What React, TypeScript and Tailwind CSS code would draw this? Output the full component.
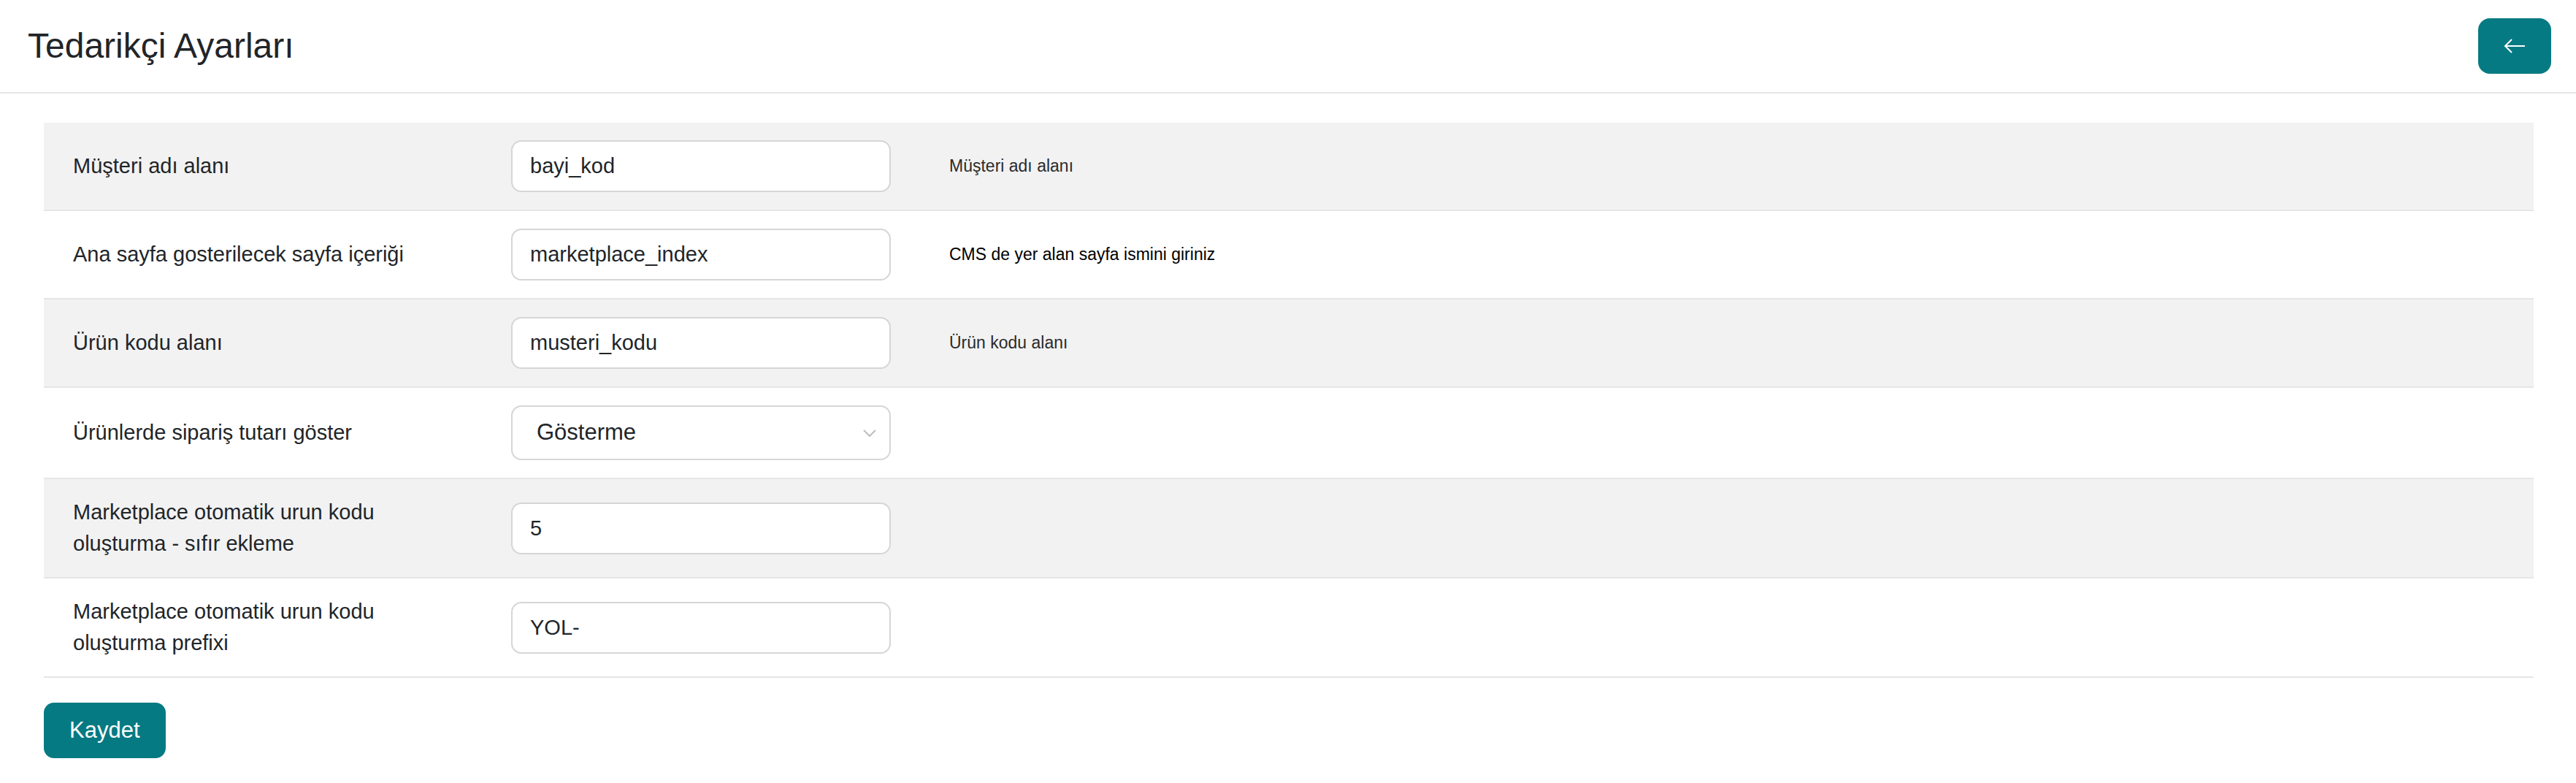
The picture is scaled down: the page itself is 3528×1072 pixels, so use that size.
import React from "react";

type Row = {
  label: string;
  value: string;
  hint?: string;
  hintDark?: boolean;
  select?: boolean;
};

const rows: Row[] = [
  { label: "Müşteri adı alanı", value: "bayi_kod", hint: "Müşteri adı alanı" },
  {
    label: "Ana sayfa gosterilecek sayfa içeriği",
    value: "marketplace_index",
    hint: "CMS de yer alan sayfa ismini giriniz",
    hintDark: true,
  },
  { label: "Ürün kodu alanı", value: "musteri_kodu", hint: "Ürün kodu alanı" },
  { label: "Ürünlerde sipariş tutarı göster", value: "Gösterme", select: true },
  { label: "Marketplace otomatik urun kodu oluşturma - sıfır ekleme", value: "5" },
  { label: "Marketplace otomatik urun kodu oluşturma prefixi", value: "YOL-" },
];

function SettingField({ row }: { row: Row }) {
  if (row.select) {
    return (
      <div className="relative w-[520px]">
        <select
          defaultValue={row.value}
          className="h-[75px] w-full appearance-none rounded-[14px] border-2 border-[#d6d6d6] bg-white pl-[33px] pr-12 text-[31px] text-[#212529] outline-none"
        >
          <option>Gösterme</option>
          <option>Göster</option>
        </select>
        <svg
          className="pointer-events-none absolute right-[20px] top-[33px]"
          width="18"
          height="10"
          viewBox="0 0 18 10"
          fill="none"
        >
          <path d="M1 1l8 8 8-8" stroke="#bdbdbd" strokeWidth="2" />
        </svg>
      </div>
    );
  }
  return (
    <input
      defaultValue={row.value}
      className="h-[71px] w-[520px] rounded-[14px] border-2 border-[#d6d6d6] bg-white px-[24px] text-[29px] text-[#212529] outline-none"
    />
  );
}

export default function App() {
  return (
    <div className="min-h-screen bg-white font-['Liberation_Sans',Arial,sans-serif] text-[#212529]">
      <header className="flex h-[128px] items-center justify-between border-b-2 border-[#e6e6e6] pl-[38px] pr-[34px]">
        <h1 className="text-[48px] font-normal leading-none">Tedarikçi Ayarları</h1>
        <button className="flex h-[76px] w-[100px] items-center justify-center rounded-[16px] bg-[#067a82]">
          <svg width="30" height="20" viewBox="0 0 30 20" fill="none">
            <path d="M29 10H2M11 1L2 10l9 9" stroke="white" strokeWidth="2" />
          </svg>
        </button>
      </header>

      <main className="pl-[60px] pr-[58px] pt-[40px]">
        <div>
          {rows.map((row, i) => (
            <div
              key={row.label}
              className={`grid grid-cols-[600px_600px_1fr] items-center border-b-2 border-[#e6e6e6] ${
                i % 2 === 0 ? "bg-[#f2f2f2]" : "bg-white"
              }`}
            >
              <div className="px-10 py-6 text-[29px] leading-[43px]">{row.label}</div>
              <div className="px-10 py-6">
                <SettingField row={row} />
              </div>
              <div
                className={`px-10 py-6 text-[23px] ${
                  row.hintDark ? "text-black" : "text-[#2b2b2b]"
                }`}
              >
                {row.hint}
              </div>
            </div>
          ))}
        </div>
        <button className="mt-[34px] h-[76px] rounded-[14px] bg-[#067a82] px-[35px] text-[31px] text-white">
          Kaydet
        </button>
      </main>
    </div>
  );
}
